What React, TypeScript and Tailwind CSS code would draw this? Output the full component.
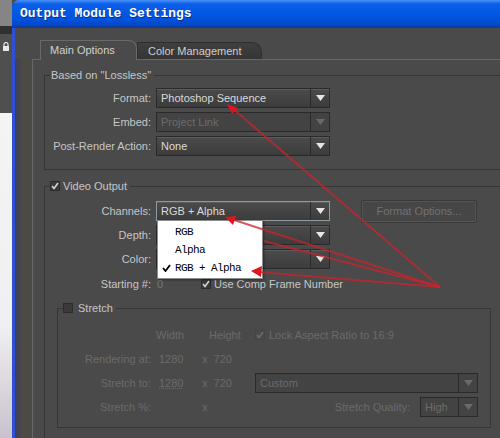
import { FC, ReactNode } from "react";

const Caret: FC<{ disabled?: boolean }> = ({ disabled }) => (
  <svg width="9" height="6" viewBox="0 0 9 6">
    <polygon points="0,0 9,0 4.5,6" fill={disabled ? "#6a6a6a" : "#e6e6e6"} />
  </svg>
);

const Dropdown: FC<{ value: string; className: string; disabled?: boolean; focus?: boolean }> = ({
  value,
  className,
  disabled,
  focus,
}) => (
  <div
    className={`flex h-[20px] border ${className} ${
      focus ? "border-[#8e9aa2]" : "border-[#2a2a2a]"
    } ${
      disabled
        ? "bg-[#434343]"
        : "bg-[linear-gradient(to_bottom,#4b4b4b,#3c3c3c)] shadow-[inset_0_1px_0_#5c5c5c]"
    }`}
  >
    <div
      className={`flex flex-1 items-center overflow-hidden whitespace-nowrap pl-[4px] ${
        disabled ? "text-[#6c6c6c]" : "text-[#dadada]"
      }`}
    >
      {value}
    </div>
    <div className="flex w-[19px] items-center justify-center border-l border-[#2a2a2a]">
      <Caret disabled={disabled} />
    </div>
  </div>
);

const Check: FC<{ checked?: boolean; disabled?: boolean }> = ({ checked, disabled }) => (
  <div
    className={`flex h-[10px] w-[10px] items-center justify-center border ${
      disabled ? "border-[#444] bg-[#4a4a4a]" : "border-[#2c2c2c] bg-[#3a3a3a]"
    }`}
  >
    {checked && (
      <svg width="8" height="8" viewBox="0 0 8 8">
        <path d="M1 4 L3 6.5 L7 1" stroke={disabled ? "#6c6c6c" : "#d4d4d4"} strokeWidth="1.6" fill="none" />
      </svg>
    )}
  </div>
);

// group box with a title sitting on the top line
const GroupHeader: FC<{ children: ReactNode; h: string; right?: boolean }> = ({ children, h, right }) => (
  <div className={`flex ${h} items-center`}>
    <div className="h-1/2 w-[6px] self-end border-l border-t border-[#363636]" />
    {children}
    <div className={`h-1/2 flex-1 self-end border-t border-[#363636] ${right ? "border-r" : ""}`} />
  </div>
);

const Label: FC<{ children: ReactNode; className: string; muted?: boolean }> = ({ children, className, muted }) => (
  <div className={`${className} text-right ${muted ? "text-[#6a6a6a]" : "text-[#c6c6c6]"}`}>{children}</div>
);

export default function App() {
  return (
    <div className="relative flex h-[438px] w-[500px] overflow-hidden bg-[#4a4a4a] font-['Liberation_Sans',Arial,sans-serif] text-[11px]">
      {/* desktop strip behind the dialog */}
      <div className="flex w-[12px] flex-col">
        <div className="h-[26px] bg-[#858585]" />
        <div className="h-[8px] bg-[#303030]" />
        <div className="flex h-[79px] flex-col items-center bg-[#4f4f4f] pt-[8px]">
          <svg width="8" height="10" viewBox="0 0 8 10">
            <rect x="1" y="4" width="6" height="5" fill="#e8e8e8" />
            <path d="M2 4 V2.5 A2 2 0 0 1 6 2.5 V4" stroke="#e8e8e8" strokeWidth="1.2" fill="none" />
          </svg>
        </div>
        <div className="flex-1 bg-[linear-gradient(to_bottom,#f4f4f4,#f0f0f2_65%,#c9c2cd)]" />
      </div>

      {/* dialog window */}
      <div className="flex flex-1 flex-col">
        <div className="flex h-[28px] items-center rounded-tl-[7px] bg-[linear-gradient(to_bottom,#4a92fa_0%,#0a5ee8_14%,#0052dc_70%,#0646c4_90%,#17398a_100%)] pl-[8px]">
          <span className="font-['Liberation_Mono',monospace] text-[13px] font-bold text-white [text-shadow:1px_1px_0_#0b2f8c]">
            Output Module Settings
          </span>
        </div>

        <div className="flex flex-1">
          <div className="w-[3px] bg-[#2f50d4]" />
          <div className="flex flex-1 flex-col pt-[12px]">
            {/* tabs */}
            <div className="relative z-10 flex pl-[25px]">
              <div className="-mb-px flex h-[20px] w-[97px] items-center rounded-tr-[8px] border border-b-0 border-[#6a6a6a] bg-[#4a4a4a] pl-[9px] text-[#d0d0d0]">
                Main Options
              </div>
              <div className="mt-[2px] flex h-[17px] w-[125px] items-center rounded-tr-[10px] border border-b-0 border-[#2e2e2e] bg-[linear-gradient(to_bottom,#3f3f3f,#353535)] pl-[10px] text-[#cfcfcf]">
                Color Management
              </div>
            </div>

            <div className="flex flex-1">
              <div className="w-[17px] bg-[linear-gradient(to_right,#3b3d5e,#4d4a44_45%,#4a4a4a)]" />
              <div className="flex flex-1 flex-col border-l border-t border-[#676767] pl-[11px]">
                {/* Based on "Lossless" */}
                <div className="mt-[9px] flex flex-col">
                  <GroupHeader h="h-[12px]">
                    <span className="pl-[1px] pr-[3px] text-[#c6c6c6]">Based on "Lossless"</span>
                  </GroupHeader>
                  <div className="flex flex-col gap-[4px] border-b border-l border-[#363636] pb-[13px] pt-[7px]">
                    <div className="flex h-[20px] items-center">
                      <Label className="w-[106px]">Format:</Label>
                      <Dropdown className="ml-[5px] w-[174px]" value="Photoshop Sequence" />
                    </div>
                    <div className="flex h-[20px] items-center">
                      <Label className="w-[106px]">Embed:</Label>
                      <Dropdown className="ml-[5px] w-[174px]" value="Project Link" disabled />
                    </div>
                    <div className="flex h-[20px] items-center">
                      <Label className="w-[106px]">Post-Render Action:</Label>
                      <Dropdown className="ml-[5px] w-[174px]" value="None" />
                    </div>
                  </div>
                </div>

                {/* Video Output */}
                <div className="mt-[10px] flex flex-1 flex-col">
                  <GroupHeader h="h-[12px]">
                    <Check checked />
                    <span className="pl-[3px] pr-[3px] text-[#c6c6c6]">Video Output</span>
                  </GroupHeader>
                  <div className="flex flex-1 flex-col gap-[4px] border-l border-[#363636] pt-[9px]">
                    <div className="flex h-[20px] items-center">
                      <Label className="w-[106px]">Channels:</Label>
                      <Dropdown className="ml-[5px] w-[174px]" value="RGB + Alpha" focus />
                      <div className="ml-[31px] flex h-[23px] w-[116px] items-center justify-center rounded-[2px] border border-[#393939] bg-[#464646] text-[#727272] shadow-[inset_0_0_0_1px_#545454]">
                        Format Options...
                      </div>
                    </div>
                    {/* values of these two are hidden under the open menu */}
                    <div className="flex h-[20px] items-center">
                      <Label className="w-[106px]">Depth:</Label>
                      <Dropdown className="ml-[5px] w-[174px]" value="" />
                    </div>
                    <div className="flex h-[20px] items-center">
                      <Label className="w-[106px]">Color:</Label>
                      <Dropdown className="ml-[5px] w-[174px]" value="" />
                    </div>
                    <div className="mt-[1px] flex h-[20px] items-center">
                      <Label className="w-[106px]">Starting #:</Label>
                      <div className="ml-[5px] w-[45px] pl-[1px] text-[#7a7a7a]">0</div>
                      <Check checked />
                      <span className="ml-[3px] text-[#c6c6c6]">Use Comp Frame Number</span>
                    </div>

                    {/* Stretch */}
                    <div className="ml-[12px] mt-[3px] flex w-[434px] flex-col">
                      <GroupHeader h="h-[14px]" right>
                        <Check />
                        <span className="pl-[5px] pr-[3px] text-[#c6c6c6]">Stretch</span>
                      </GroupHeader>
                      <div className="flex flex-col gap-[4px] border-b border-l border-r border-[#363636] pb-[10px] pt-[10px] text-[#6a6a6a]">
                        <div className="flex h-[20px] items-center">
                          <div className="w-[93px]" />
                          <div className="ml-[5px] w-[45px]">Width</div>
                          <div className="w-[54px] pl-[8px]">Height</div>
                          <div className="flex w-[223px] items-center">
                            <Check checked disabled />
                            <span className="ml-[4px]">Lock Aspect Ratio to 16:9</span>
                          </div>
                        </div>
                        <div className="flex h-[20px] items-center">
                          <Label className="w-[93px]" muted>
                            Rendering at:
                          </Label>
                          <div className="ml-[5px] w-[45px] pl-[3px]">1280</div>
                          <div className="w-[54px] pl-[1px]">x&nbsp;&nbsp;720</div>
                        </div>
                        <div className="flex h-[20px] items-center">
                          <Label className="w-[93px]" muted>
                            Stretch to:
                          </Label>
                          <div className="ml-[5px] w-[45px] pl-[3px] underline decoration-dotted">1280</div>
                          <div className="w-[54px] pl-[1px]">x&nbsp;&nbsp;720</div>
                          <Dropdown className="w-[223px]" value="Custom" disabled />
                        </div>
                        <div className="flex h-[20px] items-center">
                          <Label className="w-[93px]" muted>
                            Stretch %:
                          </Label>
                          <div className="ml-[5px] w-[45px]" />
                          <div className="w-[54px] pl-[1px]">x</div>
                          <div className="flex w-[223px] items-center justify-end">
                            <span>Stretch Quality:</span>
                            <Dropdown className="ml-[10px] w-[58px]" value="High" disabled />
                          </div>
                        </div>
                      </div>
                    </div>
                  </div>
                </div>
              </div>
            </div>
          </div>
        </div>
      </div>

      {/* open Channels menu */}
      <div className="absolute left-[157px] top-[220px] flex h-[59px] w-[106px] flex-col border border-[#8c8c8c] bg-white pt-[2px] font-['Liberation_Mono',monospace] text-[11px] tracking-[-0.6px] text-black shadow-[1px_1px_2px_rgba(0,0,0,0.4)]">
        <div className="flex h-[18px] items-center pl-[17px]">RGB</div>
        <div className="flex h-[18px] items-center pl-[17px]">Alpha</div>
        <div className="flex h-[18px] items-center">
          <svg className="ml-[4px] mr-[4px]" width="9" height="8" viewBox="0 0 9 8">
            <path d="M1 4 L3.5 7 L8 1" stroke="#000" strokeWidth="1.8" fill="none" />
          </svg>
          RGB + Alpha
        </div>
      </div>

      {/* red annotation arrows */}
      <svg className="pointer-events-none absolute left-0 top-0" width="500" height="438" viewBox="0 0 500 438">
        <g stroke="#c8242c" strokeOpacity="0.75" strokeWidth="2" fill="none">
          <line x1="440" y1="287" x2="232" y2="108" />
          <line x1="440" y1="287" x2="231" y2="219" />
          <line x1="440" y1="287" x2="264" y2="241" />
          <line x1="440" y1="287" x2="258" y2="272" />
        </g>
        <g fill="#e0141e">
          <polygon points="227,104 238,108 232,114" />
          <polygon points="225,217 236,216 233,225" />
          <polygon points="251,271 262,266 261,277" />
        </g>
      </svg>
    </div>
  );
}
